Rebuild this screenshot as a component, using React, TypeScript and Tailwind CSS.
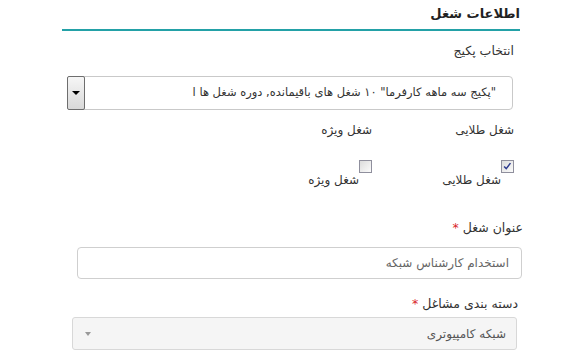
import React from 'react';

const font = { fontFamily: '"DejaVu Sans", "Noto Sans", sans-serif' };

function Check({ checked }: { checked?: boolean }) {
  return (
    <span className="relative inline-block w-[13px] h-[13px] border border-[#8f8f9d] bg-gradient-to-br from-[#dcdcdc] to-[#fbfbfb]">
      {checked && (
        <svg viewBox="0 0 13 13" className="absolute inset-0 w-[11px] h-[11px]">
          <path d="M2.5 6.5 L5 9 L10 2.5" fill="none" stroke="#2f3c8f" strokeWidth="1.8" />
        </svg>
      )}
    </span>
  );
}

export default function App() {
  return (
    <div dir="rtl" className="w-[571px] h-[364px] bg-white text-[#333] overflow-hidden" style={font}>
      <div className="mr-[51px] ml-[50px] pt-[4px]">
        <div className="text-[13px] font-bold text-[#222] leading-[20px]">اطلاعات شغل</div>
        <div className="mt-[5px] ml-[12px] h-[2px] bg-[#23a1a7]" />
      </div>

      <div className="mr-[57px] mt-[11px] text-[12.5px] leading-[18px]">انتخاب پکیج</div>

      <div className="mr-[58px] ml-[67px] mt-[16px] h-[34px] flex border border-[#c9c9c9] rounded-[4px] bg-white">
        <div className="flex-1 flex items-center pr-[16px] text-[11.5px] text-[#333] whitespace-nowrap overflow-hidden">
          "پکیج سه ماهه کارفرما" ۱۰ شغل های باقیمانده, دوره شغل ها ا
        </div>
        <div className="w-[18px] my-[-1px] ml-[-1px] border border-[#6e6e6e] rounded-[2px] bg-gradient-to-b from-[#f6f6f6] to-[#d9d9d9] flex items-center justify-center">
          <span className="w-0 h-0 border-l-[4px] border-r-[4px] border-t-[4px] border-l-transparent border-r-transparent border-t-black" />
        </div>
      </div>

      <div className="flex mr-[57px] mt-[11px] text-[12px] leading-[18px]">
        <div className="w-[142px]">شغل طلایی</div>
        <div className="w-[142px]">شغل ویژه</div>
      </div>

      <div className="flex mr-[57px] mt-[21px] text-[12px]">
        <div className="w-[142px] flex items-start">
          <Check checked />
          <span className="mt-[11px] leading-[18px]">شغل طلایی</span>
        </div>
        <div className="w-[142px] flex items-start">
          <Check />
          <span className="mt-[11px] leading-[18px]">شغل ویژه</span>
        </div>
      </div>

      <div className="mr-[48px] mt-[30px] text-[12.5px] leading-[18px]">
        عنوان شغل <span className="text-[#d9262a]">*</span>
      </div>
      <div className="mr-[49px] ml-[77px] mt-[10px] h-[32px] border border-[#cfcfcf] rounded-[4px] flex items-center pr-[12px] text-[12px] text-[#666]">
        استخدام کارشناس شبکه
      </div>

      <div className="mr-[53px] mt-[16px] text-[12.5px] leading-[18px]">
        دسته بندی مشاغل <span className="text-[#d9262a]">*</span>
      </div>
      <div className="mr-[54px] ml-[72px] mt-[4px] h-[33px] border border-[#d8d8d8] rounded-[3px] bg-[#f5f5f5] flex items-center justify-between pr-[10px] pl-[12px] text-[12px] text-[#555]">
        <span>شبکه کامپیوتری</span>
        <span className="w-0 h-0 border-l-[3px] border-r-[3px] border-t-[4px] border-l-transparent border-r-transparent border-t-[#999]" />
      </div>
    </div>
  );
}
